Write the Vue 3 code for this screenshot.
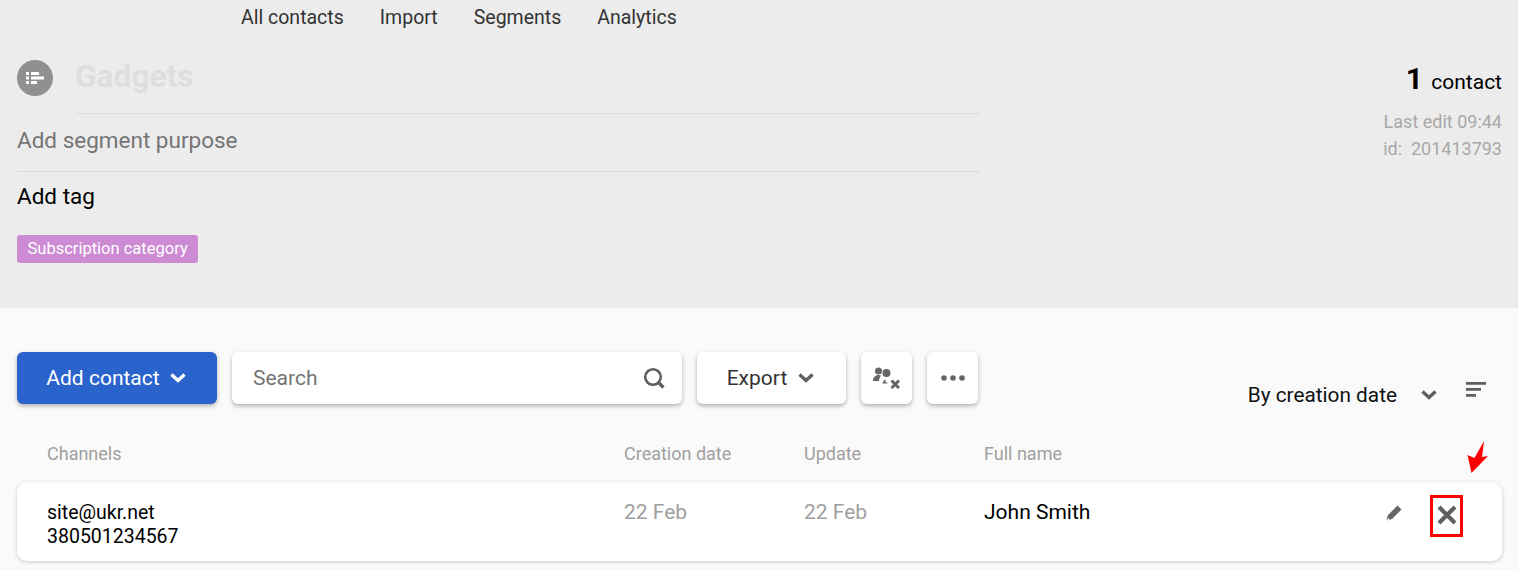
<template>
  <div class="page">
    <section class="head">
      <nav class="nav">
        <a v-for="item in navItems" :key="item">{{ item }}</a>
      </nav>
      <div class="head-body">
        <div class="head-main">
          <div class="title-row">
            <span class="seg-icon">
              <svg width="18" height="14" viewBox="0 0 18 14">
                <path fill="#fff" d="M0 1h3v3H0zM5 1h8v3H5zM0 5.500h3v3H0zM5 5.500h13v3H5zM0 10h3v3H0zM5 10h6v3H5z" />
              </svg>
            </span>
            <h1 class="title">Gadgets</h1>
          </div>
          <div class="purpose">Add segment purpose</div>
          <div class="add-tag">Add tag</div>
          <span class="tag">Subscription category</span>
        </div>
        <div class="head-side">
          <div class="count"><b>1</b> contact</div>
          <div class="meta">Last edit 09:44</div>
          <div class="meta">id:&nbsp; 201413793</div>
        </div>
      </div>
    </section>

    <section class="content">
      <div class="toolbar">
        <button class="btn primary">
          Add contact
          <svg width="16" height="10" viewBox="0 0 16 10"><path d="M1.500 1.500L8 7.500l6.500-6" fill="none" stroke="#fff" stroke-width="3.400" /></svg>
        </button>
        <div class="search">
          <span>Search</span>
          <svg width="22" height="22" viewBox="0 0 22 22"><circle cx="10" cy="10" r="7.800" fill="none" stroke="#5f5f5f" stroke-width="2.600" /><path d="M15.500 15.500L20.500 20.500" stroke="#5f5f5f" stroke-width="3.200" /></svg>
        </div>
        <button class="btn export">
          Export
          <svg width="16" height="10" viewBox="0 0 16 10"><path d="M1.500 1.500L8 7.500l6.500-6" fill="none" stroke="#5f5f5f" stroke-width="3.400" /></svg>
        </button>
        <button class="btn square">
          <svg width="28" height="22" viewBox="0 0 28 22">
            <circle cx="5.500" cy="4" r="3.500" fill="#666" />
            <circle cx="13.500" cy="6" r="4" fill="#666" />
            <path fill="#666" d="M0 14c0-3.500 2.500-6 5.500-6 1 0 2 .2 2.700.8C6.600 10.200 6 12 6 14zM9.500 16.500c.3-2 1.500-3.500 3.500-4.200l-.6 2.400 2.600 1.800z" />
            <path d="M18.500 13.500l7.500 7.500M26 13.500L18.500 21" stroke="#666" stroke-width="3" />
          </svg>
        </button>
        <button class="btn square">
          <svg width="24" height="6" viewBox="0 0 24 6"><circle cx="3" cy="3" r="2.800" fill="#666" /><circle cx="12" cy="3" r="2.800" fill="#666" /><circle cx="21" cy="3" r="2.800" fill="#666" /></svg>
        </button>
        <div class="sort">
          <span>By creation date</span>
          <svg class="sort-chev" width="16" height="10" viewBox="0 0 16 10"><path d="M1.500 1.500L8 7.500l6.500-6" fill="none" stroke="#5f5f5f" stroke-width="3.400" /></svg>
          <svg class="sort-icon" width="20" height="16" viewBox="0 0 20 16"><path fill="#5f5f5f" d="M0 0h20v2.800H0zM0 6h15v2.800H0zM0 12h10v2.800H0z" /></svg>
        </div>
      </div>

      <div class="columns grid">
        <div>Channels</div>
        <div>Creation date</div>
        <div>Update</div>
        <div>Full name</div>
      </div>

      <div class="row grid">
        <div class="channels">
          <div v-for="line in contact.channels" :key="line">{{ line }}</div>
        </div>
        <div class="date">{{ contact.created }}</div>
        <div class="date">{{ contact.updated }}</div>
        <div class="name">{{ contact.name }}</div>
        <div class="actions">
          <svg class="pencil" width="16" height="16" viewBox="0 0 16 16"><path fill="#666" d="M11.500 0.500l4 4L6 14 1.500 15.500 0.500 14.500 2 10zM1 15.800l3-1-2-2z" /></svg>
          <span class="remove">
            <svg width="20" height="20" viewBox="0 0 20 20"><path d="M2 2l16 16M18 2L2 18" stroke="#5f5f5f" stroke-width="4.200" /></svg>
          </span>
          <svg class="arrow" width="22" height="32" viewBox="0 0 22 32"><path fill="#fd0000" d="M17 0L15 16l6-1L4.500 32 .5 14l7 3z" /></svg>
        </div>
      </div>
    </section>
  </div>
</template>

<script setup>
const navItems = ['All contacts', 'Import', 'Segments', 'Analytics']

const contact = {
  channels: ['site@ukr.net', '380501234567'],
  created: '22 Feb',
  updated: '22 Feb',
  name: 'John Smith'
}
</script>

<style>
html,
body {
  margin: 0;
  background: #fafafa;
}
</style>

<style scoped>
.page {
  font-family: Roboto, "Liberation Sans", sans-serif;
  height: 570px;
  overflow: hidden;
  color: #000;
}

.head {
  background: #ececec;
  height: 308px;
  padding: 0 16px 0 17px;
  box-sizing: border-box;
}

.nav {
  display: flex;
  gap: 36px;
  padding: 6px 0 0 224px;
  height: 23px;
  line-height: 24px;
  font-size: 19.500px;
  color: #333;
}

.head-body {
  display: flex;
  justify-content: space-between;
}

.head-main {
  width: 963px;
}

.title-row {
  display: flex;
  align-items: flex-start;
  gap: 22px;
  padding-top: 31px;
}

.seg-icon {
  width: 36px;
  height: 36px;
  border-radius: 50%;
  background: #909090;
  display: flex;
  align-items: center;
  justify-content: center;
  flex-shrink: 0;
}

.title {
  flex: 1;
  margin: 0;
  font-size: 31.700px;
  font-weight: 700;
  line-height: 33px;
  height: 54px;
  color: #dedede;
  border-bottom: 1px solid #dcdcdc;
  box-sizing: border-box;
}

.purpose {
  font-size: 22.500px;
  color: #757575;
  line-height: 53px;
  height: 58px;
  border-bottom: 1px solid #dcdcdc;
  box-sizing: border-box;
}

.add-tag {
  font-size: 22.500px;
  line-height: 48px;
  margin-bottom: 15px;
}

.tag {
  display: inline-block;
  height: 28px;
  line-height: 28px;
  padding: 0 10.500px;
  font-size: 16.500px;
  color: #fff;
  background: #cd8bd3;
  border-radius: 3px;
}

.head-side {
  text-align: right;
  padding-top: 30px;
}

.count {
  font-size: 21px;
  line-height: 40px;
  margin-bottom: 6px;
}

.count b {
  font-size: 30px;
  margin-right: 3px;
}

.meta {
  font-size: 18px;
  line-height: 27px;
  color: #a8a8a8;
}

.content {
  padding: 44px 16px 0 17px;
}

.toolbar {
  display: flex;
  align-items: flex-start;
  gap: 15px;
}

.btn {
  height: 52px;
  border: 0;
  border-radius: 6px;
  background: #fff;
  font: inherit;
  font-size: 21px;
  color: #333;
  display: flex;
  align-items: center;
  justify-content: center;
  box-shadow: 0 2px 4px rgba(0, 0, 0, 0.3);
  padding: 0;
}

.primary {
  width: 200px;
  background: #2a63cc;
  color: #fff;
  gap: 10px;
  padding-right: 2px;
}

.export {
  width: 149px;
  gap: 11px;
  padding-right: 2px;
}

.square {
  width: 51px;
}

.search {
  width: 450px;
  height: 52px;
  box-sizing: border-box;
  padding: 0 17px 0 21px;
  background: #fff;
  border-radius: 6px;
  box-shadow: 0 2px 4px rgba(0, 0, 0, 0.3);
  display: flex;
  align-items: center;
  justify-content: space-between;
  font-size: 21px;
  color: #757575;
}

.sort {
  margin-left: auto;
  display: flex;
  align-items: center;
  padding: 28px 16px 0 0;
  height: 30px;
  font-size: 20.800px;
  color: #111;
}

.sort-chev {
  margin-left: 24px;
}

.sort-icon {
  margin: -10px 0 0 29px;
}

.grid {
  display: grid;
  grid-template-columns: 577px 180px 180px 1fr 130px;
  padding-left: 30px;
}

.columns {
  padding-top: 30px;
  height: 42px;
  line-height: 28px;
  font-size: 18px;
  color: #a0a0a0;
}

.row {
  height: 79px;
  background: #fff;
  border-radius: 10px;
  box-shadow: 0 1px 4px rgba(0, 0, 0, 0.2);
  padding-top: 18px;
  box-sizing: border-box;
}

.channels {
  font-size: 19.500px;
  line-height: 24px;
  padding-top: 1px;
}

.date {
  font-size: 21px;
  line-height: 24px;
  color: #a0a0a0;
}

.name {
  font-size: 21px;
  line-height: 24px;
}

.actions {
  position: relative;
  display: flex;
  align-items: flex-start;
  justify-content: flex-end;
  gap: 27px;
  padding-right: 39px;
}

.pencil {
  margin-top: 5px;
  margin-right: 1px;
}

.remove {
  width: 33px;
  height: 42px;
  box-sizing: border-box;
  border: 3px solid #f00;
  padding-bottom: 2px;
  display: flex;
  align-items: center;
  justify-content: center;
  margin-top: -5px;
}

.arrow {
  position: absolute;
  right: 13px;
  top: -59px;
}
</style>
